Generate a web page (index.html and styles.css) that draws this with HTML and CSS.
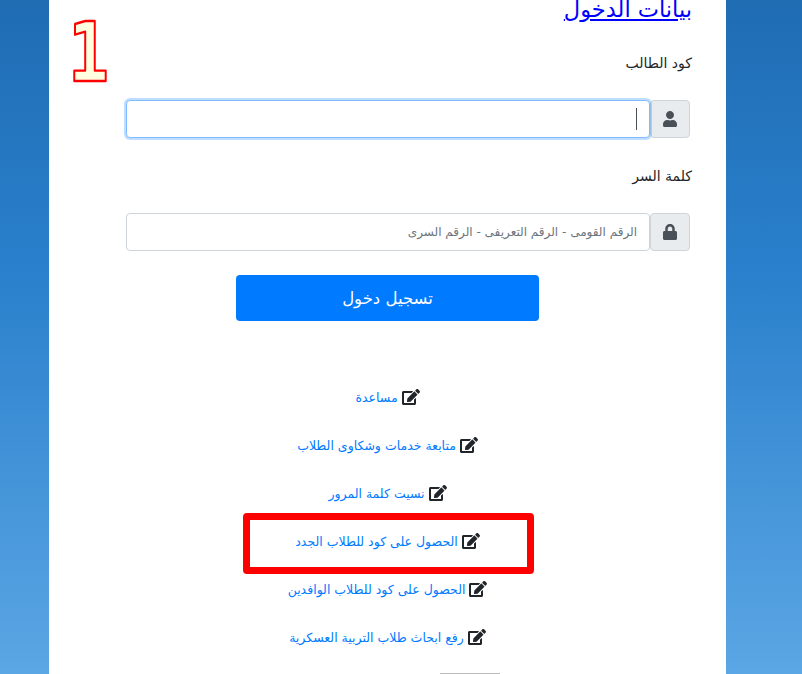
FILE: index.html
```html
<!DOCTYPE html>
<html lang="ar" dir="rtl">
<head>
<meta charset="utf-8">
<title>بيانات الدخول</title>
<link rel="stylesheet" href="styles.css">
</head>
<body>
<main class="panel">
  <svg class="step" viewBox="0 0 60 80"><text class="step-text" x="29.5" y="73" text-anchor="middle" textLength="41" lengthAdjust="spacingAndGlyphs">1</text></svg>
  <h2 class="title"><a href="#">بيانات الدخول</a></h2>
  <label class="label" for="code">كود الطالب</label>
  <div class="group">
    <span class="addon">
      <svg class="addon-icon" viewBox="0 0 448 512"><path d="M224 256c70.700 0 128-57.300 128-128S294.700 0 224 0 96 57.300 96 128s57.300 128 128 128zm89.600 32h-16.700c-22.200 10.200-46.900 16-72.900 16s-50.600-5.800-72.900-16h-16.700C60.200 288 0 348.200 0 422.400V464c0 26.500 21.500 48 48 48h352c26.500 0 48-21.500 48-48v-41.600c0-74.200-60.200-134.400-134.400-134.400z"/></svg>
    </span>
    <div class="input input-focus" id="code"><span class="caret"></span></div>
  </div>
  <label class="label label-second" for="pass">كلمة السر</label>
  <div class="group">
    <span class="addon">
      <svg class="addon-icon" viewBox="0 0 448 512"><path d="M400 224h-24v-72C376 68.200 307.800 0 224 0S72 68.200 72 152v72H48c-26.500 0-48 21.500-48 48v192c0 26.500 21.500 48 48 48h352c26.500 0 48-21.500 48-48V272c0-26.500-21.500-48-48-48zm-104 0H152v-72c0-39.700 32.300-72 72-72s72 32.300 72 72v72z"/></svg>
    </span>
    <div class="input" id="pass"><span class="placeholder">الرقم القومى - الرقم التعريفى - الرقم السرى</span></div>
  </div>
  <div class="submit-row"><button class="submit" type="button">تسجيل دخول</button></div>
  <nav class="links">
    <a class="link" href="#"><svg class="edit" viewBox="0 0 576 512"><path d="M402.600 83.200l90.200 90.200c3.800 3.800 3.800 10 0 13.800L274.400 405.600l-92.800 10.300c-12.400 1.400-22.900-9.100-21.500-21.500l10.300-92.800L388.800 83.200c3.800-3.800 10-3.800 13.800 0zm162-22.900l-48.800-48.800c-15.200-15.200-39.900-15.200-55.200 0l-35.400 35.400c-3.800 3.800-3.800 10 0 13.800l90.200 90.200c3.800 3.800 10 3.800 13.800 0l35.400-35.400c15.200-15.300 15.200-40 0-55.200zM384 346.200V448H64V128h229.800c3.200 0 6.200-1.300 8.500-3.500l40-40c7.600-7.600 2.200-20.500-8.500-20.500H48C21.500 64 0 85.500 0 112v352c0 26.500 21.500 48 48 48h352c26.500 0 48-21.500 48-48V306.200c0-10.700-12.900-16-20.500-8.500l-40 40c-2.200 2.300-3.500 5.300-3.500 8.500z"/></svg> مساعدة</a>
    <a class="link" href="#"><svg class="edit" viewBox="0 0 576 512"><path d="M402.600 83.200l90.200 90.200c3.800 3.800 3.800 10 0 13.800L274.400 405.600l-92.800 10.300c-12.400 1.400-22.900-9.100-21.500-21.500l10.300-92.800L388.800 83.200c3.800-3.800 10-3.800 13.800 0zm162-22.900l-48.800-48.800c-15.200-15.200-39.900-15.200-55.200 0l-35.400 35.400c-3.800 3.800-3.800 10 0 13.800l90.200 90.200c3.800 3.800 10 3.800 13.800 0l35.400-35.400c15.200-15.300 15.200-40 0-55.200zM384 346.200V448H64V128h229.800c3.200 0 6.200-1.300 8.500-3.500l40-40c7.600-7.600 2.200-20.500-8.500-20.500H48C21.500 64 0 85.500 0 112v352c0 26.500 21.500 48 48 48h352c26.500 0 48-21.500 48-48V306.200c0-10.700-12.900-16-20.500-8.500l-40 40c-2.200 2.300-3.500 5.300-3.500 8.500z"/></svg> متابعة خدمات وشكاوى الطلاب</a>
    <a class="link" href="#"><svg class="edit" viewBox="0 0 576 512"><path d="M402.600 83.200l90.200 90.200c3.800 3.800 3.800 10 0 13.800L274.400 405.600l-92.800 10.300c-12.400 1.400-22.900-9.100-21.500-21.500l10.300-92.800L388.800 83.200c3.800-3.800 10-3.800 13.800 0zm162-22.900l-48.800-48.800c-15.200-15.200-39.900-15.200-55.200 0l-35.400 35.400c-3.800 3.800-3.800 10 0 13.800l90.200 90.200c3.800 3.800 10 3.800 13.800 0l35.400-35.400c15.200-15.300 15.200-40 0-55.200zM384 346.200V448H64V128h229.800c3.200 0 6.200-1.300 8.500-3.500l40-40c7.600-7.600 2.200-20.500-8.500-20.500H48C21.500 64 0 85.500 0 112v352c0 26.500 21.500 48 48 48h352c26.500 0 48-21.500 48-48V306.200c0-10.700-12.900-16-20.500-8.500l-40 40c-2.200 2.300-3.500 5.300-3.500 8.500z"/></svg> نسيت كلمة المرور</a>
    <a class="link" href="#"><svg class="edit" viewBox="0 0 576 512"><path d="M402.600 83.200l90.200 90.200c3.800 3.800 3.800 10 0 13.800L274.400 405.600l-92.800 10.300c-12.400 1.400-22.900-9.100-21.500-21.500l10.300-92.800L388.800 83.200c3.800-3.800 10-3.800 13.800 0zm162-22.900l-48.800-48.800c-15.200-15.200-39.900-15.200-55.200 0l-35.400 35.400c-3.800 3.800-3.800 10 0 13.800l90.200 90.200c3.800 3.800 10 3.800 13.800 0l35.400-35.400c15.200-15.300 15.200-40 0-55.200zM384 346.200V448H64V128h229.800c3.200 0 6.200-1.300 8.500-3.500l40-40c7.600-7.600 2.200-20.500-8.500-20.500H48C21.500 64 0 85.500 0 112v352c0 26.500 21.500 48 48 48h352c26.500 0 48-21.500 48-48V306.200c0-10.700-12.900-16-20.500-8.500l-40 40c-2.200 2.300-3.500 5.300-3.500 8.500z"/></svg> الحصول على كود للطلاب الجدد</a>
    <a class="link" href="#"><svg class="edit" viewBox="0 0 576 512"><path d="M402.600 83.200l90.200 90.200c3.800 3.800 3.800 10 0 13.800L274.400 405.600l-92.800 10.300c-12.400 1.400-22.900-9.100-21.500-21.500l10.300-92.800L388.800 83.200c3.800-3.800 10-3.800 13.800 0zm162-22.900l-48.800-48.800c-15.200-15.200-39.900-15.200-55.200 0l-35.400 35.400c-3.800 3.800-3.800 10 0 13.800l90.200 90.200c3.800 3.800 10 3.800 13.800 0l35.400-35.400c15.200-15.300 15.200-40 0-55.200zM384 346.200V448H64V128h229.800c3.200 0 6.200-1.300 8.500-3.500l40-40c7.600-7.600 2.200-20.500-8.500-20.500H48C21.500 64 0 85.500 0 112v352c0 26.500 21.500 48 48 48h352c26.500 0 48-21.500 48-48V306.200c0-10.700-12.900-16-20.500-8.500l-40 40c-2.200 2.300-3.500 5.300-3.500 8.500z"/></svg> الحصول على كود للطلاب الوافدين</a>
    <a class="link" href="#"><svg class="edit" viewBox="0 0 576 512"><path d="M402.600 83.200l90.200 90.200c3.800 3.800 3.800 10 0 13.800L274.400 405.600l-92.800 10.300c-12.400 1.400-22.900-9.100-21.500-21.500l10.300-92.800L388.800 83.200c3.800-3.800 10-3.800 13.800 0zm162-22.900l-48.800-48.800c-15.200-15.200-39.900-15.200-55.200 0l-35.400 35.400c-3.800 3.800-3.800 10 0 13.800l90.200 90.200c3.800 3.800 10 3.800 13.800 0l35.400-35.400c15.200-15.300 15.200-40 0-55.200zM384 346.200V448H64V128h229.800c3.200 0 6.200-1.300 8.500-3.500l40-40c7.600-7.600 2.200-20.500-8.500-20.500H48C21.500 64 0 85.500 0 112v352c0 26.500 21.500 48 48 48h352c26.500 0 48-21.500 48-48V306.200c0-10.700-12.900-16-20.500-8.500l-40 40c-2.200 2.300-3.500 5.300-3.500 8.500z"/></svg> رفع ابحاث طلاب التربية العسكرية</a>
  </nav>
  <div class="next-edge"></div>
  <div class="highlight"></div>
</main>
</body>
</html>
```
FILE: styles.css
```css
* { box-sizing: border-box; }
html, body { height: 674px; overflow: hidden; }
body {
  margin: 0;
  background: linear-gradient(180deg, #1f6cb3 0%, #2a80cc 40%, #5ba6e4 100%);
  font-family: "DejaVu Sans", sans-serif;
  color: #212529;
}
.panel {
  position: relative;
  width: 677px;
  height: 674px;
  margin-right: 76px;
  padding: 0 34px 0 36px;
  background: #fff;
  overflow: hidden;
}
.step {
  position: absolute;
  left: 10px;
  top: 8px;
  width: 60px;
  height: 80px;
}
.step-text {
  direction: ltr;
  font-family: "DejaVu Sans Mono", monospace;
  font-size: 82px;
  font-weight: 700;
  fill: #ffffe0;
  stroke: #f00;
  stroke-width: 2.4px;
  stroke-linejoin: round;
}
.title { margin: -9px 0 0; height: 41px; font-size: 22.5px; font-weight: 400; line-height: 36px; }
.title a { color: #00f; }
.label { display: block; margin-top: 19px; height: 24px; font-size: 14px; line-height: 24px; color: #212529; }
.label-second { margin-top: 26px; }
.group { display: flex; margin: 25px 2px 0 0; width: 564px; height: 38px; }
.addon {
  display: flex; align-items: center; justify-content: center;
  width: 40px; background: #e9ecef;
  border: 1px solid #ced4da; border-radius: 4px;
}
.addon-icon { width: 14px; height: 16px; fill: #495057; }
.input {
  flex: 1; display: flex; align-items: center; padding: 0 12px;
  border: 1px solid #ced4da; border-radius: 4px; background: #fff;
}
.input-focus { border-color: #80bdff; box-shadow: 0 0 0 2px rgba(0,123,255,.25); }
.caret { width: 1px; height: 22px; background: #495057; }
.placeholder { font-size: 12px; color: #6c757d; white-space: nowrap; }
.submit-row { display: flex; justify-content: center; margin-top: 24px; padding-right: 2px; }
.submit {
  width: 303px; height: 46px; border: 0; border-radius: 4px;
  background: #007bff; color: #fff; font: 400 16.5px "DejaVu Sans", sans-serif;
}
.links { display: flex; flex-direction: column; margin-top: 53px; align-items: center; padding-right: 2px; }
.link { display: block; height: 48px; line-height: 48px; font-size: 12.5px; color: #007bff; text-decoration: none; white-space: nowrap; }
.edit { width: 18px; height: 16px; fill: #212529; vertical-align: -3px; }
.next-edge { width: 60px; height: 1px; margin: 11px 192px 0 0; background: #bbb; }
.highlight {
  position: absolute; left: 194px; top: 513px;
  width: 291px; height: 61px;
  border: 7px solid #f00; border-radius: 4px;
}
```
